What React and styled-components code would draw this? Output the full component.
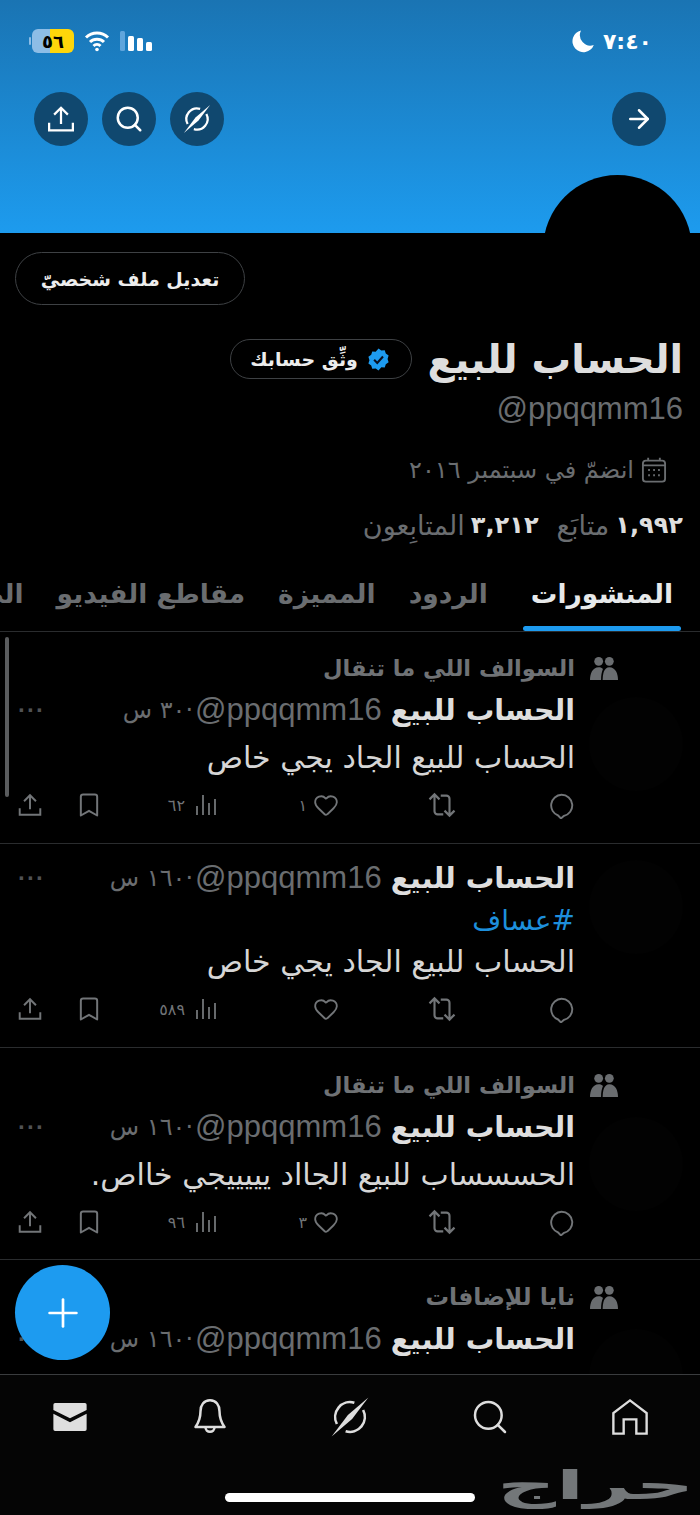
import styled, { createGlobalStyle } from "styled-components";
import { ArrowRight, Heart, Bookmark, Search, Plus } from "lucide-react";

const arabic = `"DejaVu Sans", "Noto Sans", sans-serif`;

const GlobalStyle = createGlobalStyle`
	html, body {
		margin: 0;
		padding: 0;
		background: #000000;
	}
	* {
		box-sizing: border-box;
	}
`;

function Glyph({ size = 24, children, ...rest }) {
	return (
		<svg width={size} height={size} viewBox="0 0 24 24" fill="none" stroke="currentColor" strokeWidth="2" {...rest}>
			{children}
		</svg>
	);
}

const ShareIcon = ({ size }) => (
	<Glyph size={size} strokeWidth="1.8">
		<path d="M12 16V3M6.5 8.5 12 3l5.5 5.5M2.5 15v6h19v-6" />
	</Glyph>
);

const OrbitIcon = ({ size, weight = 1.5 }) => (
	<Glyph size={size} strokeWidth={weight}>
		<path d="M14.5 3.9A8.5 8.5 0 0 0 4.5 16" />
		<path d="M19.5 8A8.5 8.5 0 0 1 9.5 20.1" />
		<path d="M22.5 .8 13.2 13.2 1.5 23.2 10.8 10.8Z" fill="currentColor" stroke="none" />
	</Glyph>
);

const MoonIcon = () => (
	<Glyph size={24} stroke="none">
		<path d="M10 1.5A11 11 0 1 0 22.8 16 10.5 10.5 0 0 1 10 1.5Z" fill="currentColor" />
	</Glyph>
);

const ReplyIcon = () => (
	<Glyph size={27} strokeWidth="1.7">
		<path d="M12 2.5a9.5 9.5 0 0 1 2 18.8L11.5 23.5 9 20.9A9.5 9.5 0 0 1 12 2.5Z" strokeLinejoin="round" />
	</Glyph>
);

const RepostIcon = () => (
	<Glyph size={30} strokeWidth="1.7">
		<path d="M2 7.5 6 3.5l4 4M6 4v13a2.5 2.5 0 0 0 2.5 2.5H13" />
		<path d="M22 16.5l-4 4-4-4M18 20V7a2.5 2.5 0 0 0-2.5-2.5H11" />
	</Glyph>
);

const ViewsIcon = () => (
	<Glyph size={24} strokeWidth="1.8">
		<path d="M3 13v9M9 2v20M15 10v12M21 6v16" />
	</Glyph>
);

const HomeIcon = () => (
	<Glyph size={38} strokeWidth="1.5">
		<path d="M1.5 22.5V9.5L12 1.5l10.5 8v13H16v-9H8v9Z" />
	</Glyph>
);

const BellIcon = () => (
	<Glyph size={40} strokeWidth="1.5">
		<path d="M12 2c-3.7 0-5.700 2.900-5.700 6.500 0 4.800-1.300 7-3 9.500h17.400c-1.700-2.500-3-4.700-3-9.500C17.700 4.900 15.700 2 12 2Z" strokeLinejoin="round" />
		<path d="M9.300 18.200a2.700 2.700 0 0 0 5.400 0" />
	</Glyph>
);

const MailIcon = () => (
	<Glyph size={42} stroke="none">
		<path d="M3.500 4h17a1 1 0 0 1 1 1v3L12 12.700 2.500 8V5a1 1 0 0 1 1-1Z" fill="currentColor" />
		<path d="M2.500 10.200 12 15l9.500-4.800V19a1 1 0 0 1-1 1h-17a1 1 0 0 1-1-1Z" fill="currentColor" />
	</Glyph>
);

const UsersIcon = () => (
	<Glyph size={32} stroke="none">
		<circle cx="8" cy="7" r="3.300" fill="currentColor" />
		<circle cx="16" cy="7" r="3.300" fill="currentColor" />
		<path d="M1.500 21c0-4.500 1.800-9.500 6.500-9.500 1.500 0 2.500.5 3.200 1.300-1 2.300-1.400 5-1.400 8.200Z" fill="currentColor" />
		<path d="M11 21c0-4.500 1-9.500 5-9.500 4.700 0 6.500 5 6.500 9.500Z" fill="currentColor" />
	</Glyph>
);

const CalendarIcon = () => (
	<Glyph size={28} strokeWidth="1.600">
		<rect x="2.500" y="4" width="19" height="18" rx="2.500" />
		<path d="M2.500 8h19M7 1.500V4M17 1.500V4" />
		<path d="M7 12h1.500M11.300 12h1.500M15.500 12h1.500M7 16.500h1.500M11.300 16.500h1.500M15.500 16.500h1.500" />
	</Glyph>
);

const VerifiedIcon = () => (
	<Glyph size={25} stroke="none">
		<path
			d="M12 1.500l2.700 1.900 3.300-.2 1 3.100 2.700 1.900-1 3.200 1 3.200-2.700 1.900-1 3.100-3.300-.2L12 22.500l-2.700-1.900-3.300.2-1-3.100-2.700-1.900 1-3.200-1-3.200 2.700-1.900 1-3.100 3.300.2Z"
			fill="#1d9bf0"
		/>
		<path d="M7.800 12.300l3 3 5.500-6.200" stroke="#0a1020" strokeWidth="2" />
	</Glyph>
);

const WifiIcon = () => (
	<svg width="26" height="22" viewBox="0 0 26 22" fill="none" stroke="#ffffff" strokeWidth="3">
		<path d="M2 7.500a16 16 0 0 1 22 0M6 12a10 10 0 0 1 14 0M9.500 16a5 5 0 0 1 7 0" />
		<circle cx="13" cy="19.500" r="1.800" fill="#ffffff" stroke="none" />
	</svg>
);

const Page = styled.div`
	position: relative;
	width: 700px;
	height: 1515px;
	overflow: hidden;
	display: flex;
	flex-direction: column;
	background: #000000;
	color: #e7e9ea;
	font-family: ${arabic};
`;

const Banner = styled.header`
	flex: none;
	height: 233px;
	padding-top: 29px;
	background: linear-gradient(180deg, #1a74b3 0%, #1d9bee 100%);
`;

const StatusBar = styled.div`
	height: 24px;
	padding: 0 48px 0 32px;
	display: flex;
	justify-content: space-between;
	align-items: center;
	color: #ffffff;
`;

const Clock = styled.div`
	display: flex;
	align-items: center;
	gap: 8px;
	font-size: 22px;
	font-weight: 700;
`;

const Indicators = styled.div`
	display: flex;
	align-items: center;
	gap: 10px;
	direction: ltr;
`;

const Battery = styled.div`
	position: relative;
	width: 42px;
	height: 24px;
	border-radius: 6px;
	display: flex;
	align-items: center;
	justify-content: center;
	background: linear-gradient(90deg, #8dbde6 42%, #ffd60a 42%);
	color: #000000;
	font-size: 18px;
	font-weight: 700;

	&::before {
		content: "";
		position: absolute;
		left: -3px;
		top: 8px;
		width: 2px;
		height: 8px;
		border-radius: 1px;
		background: #8dbde6;
	}
`;

const Signal = styled.div`
	display: flex;
	align-items: flex-end;
	gap: 3px;
	height: 20px;
`;

const SignalBar = styled.span`
	width: ${(p) => (p.$off ? 5 : 6)}px;
	height: ${(p) => p.$h}px;
	border-radius: 1.5px;
	background: ${(p) => (p.$off ? "#5fa5dc" : "#ffffff")};
`;

const ActionBar = styled.div`
	margin-top: 39px;
	padding: 0 34px;
	display: flex;
	justify-content: space-between;
`;

const ActionGroup = styled.div`
	display: flex;
	gap: 14px;
`;

const RoundButton = styled.button`
	width: 54px;
	height: 54px;
	padding: 0;
	border: none;
	border-radius: 50%;
	display: flex;
	align-items: center;
	justify-content: center;
	background: #10486f;
	color: #ffffff;
`;

const Avatar = styled.div`
	position: absolute;
	top: 175px;
	right: 8px;
	width: 149px;
	height: 149px;
	border-radius: 50%;
	background: #000000;
`;

const Profile = styled.section`
	flex: none;
	padding: 19px 17px 0 15px;
`;

const EditRow = styled.div`
	display: flex;
	justify-content: flex-end;
`;

const EditButton = styled.button`
	width: 230px;
	height: 53px;
	border: 1.5px solid #3e4144;
	border-radius: 27px;
	background: transparent;
	color: #ededed;
	font-family: ${arabic};
	font-size: 19px;
	font-weight: 700;
`;

const NameRow = styled.div`
	margin-top: 33px;
	display: flex;
	align-items: center;
	gap: 16px;
`;

const Name = styled.h1`
	margin: 0;
	font-size: 39.5px;
	line-height: 42px;
	font-weight: 700;
	color: #dedede;
`;

const VerifyPill = styled.div`
	width: 182px;
	height: 40px;
	border: 1.5px solid #3e4144;
	border-radius: 20px;
	display: flex;
	align-items: center;
	justify-content: center;
	gap: 8px;
	font-size: 19px;
	font-weight: 700;
	color: #ededed;
`;

const Handle = styled.div`
	margin-top: 10px;
	font-family: "Liberation Sans", Arial, sans-serif;
	font-size: 31px;
	line-height: 38px;
	color: #6a6d70;
	direction: ltr;
	text-align: right;
`;

const JoinRow = styled.div`
	margin-top: 27px;
	padding-right: 15px;
	height: 30px;
	display: flex;
	align-items: center;
	gap: 6px;
	font-size: 24px;
	color: #6a6d70;
`;

const StatsRow = styled.div`
	margin-top: 24px;
	height: 32px;
	display: flex;
	align-items: center;
	gap: 18px;
	font-size: 27px;
	color: #6a6d70;
`;

const Stat = styled.span`
	display: flex;
	align-items: center;
	gap: 6px;
`;

const StatNumber = styled.b`
	font-size: 24px;
	color: #dedede;
`;

const Tabs = styled.nav`
	flex: none;
	margin-top: 30px;
	height: 61px;
	padding-right: 19px;
	display: flex;
	gap: 1px;
	overflow: hidden;
	border-bottom: 1px solid #2a2c2e;
`;

const Tab = styled.div`
	flex: none;
	position: relative;
	padding: 0 ${(p) => p.$pad || 16}px 16px;
	margin-left: ${(p) => (p.$active ? 18 : 0)}px;
	height: 60px;
	display: flex;
	align-items: center;
	font-size: 26.5px;
	font-weight: 700;
	color: ${(p) => (p.$active ? "#e7e9ea" : "#6a6d70")};

	${(p) =>
		p.$active &&
		`&::after {
		content: "";
		position: absolute;
		left: 0;
		right: 0;
		bottom: 0;
		height: 5px;
		border-radius: 3px;
		background: #1d9bf0;
	}`}
`;

const Feed = styled.main`
	flex: 1;
	min-height: 0;
	overflow: hidden;
`;

const ScrollThumb = styled.div`
	position: absolute;
	top: 637px;
	left: 5px;
	width: 4px;
	height: 160px;
	border-radius: 2px;
	background: #5a5c5e;
`;

const Post = styled.article`
	position: relative;
	height: ${(p) => p.$h}px;
	padding: ${(p) => p.$top}px 125px 0 14px;
	border-bottom: 1px solid #2a2c2e;
`;

const PostAvatar = styled.span`
	position: absolute;
	top: ${(p) => p.$top}px;
	right: 17px;
	width: 94px;
	height: 94px;
	border-radius: 50%;
	background: #020202;
`;

const Context = styled.div`
	position: relative;
	height: 32px;
	display: flex;
	align-items: center;
	font-size: ${(p) => p.$size}px;
	font-weight: 700;
	color: #6f7275;
	margin-bottom: 9px;
`;

const ContextIcon = styled.span`
	position: absolute;
	right: -45px;
	top: 0;
	color: #6a6d70;
`;

const Meta = styled.div`
	height: 34px;
	display: flex;
	align-items: center;
	gap: 9px;
`;

const AuthorName = styled.span`
	font-size: 28.5px;
	font-weight: 700;
	color: #dedede;
`;

const AuthorHandle = styled.span`
	font-family: "Liberation Sans", Arial, sans-serif;
	font-size: 31px;
	color: #6a6d70;
	direction: ltr;
`;

const Age = styled.span`
	margin-right: -7px;
	font-size: 24px;
	color: #6a6d70;
`;

const More = styled.span`
	margin-right: auto;
	margin-left: 4px;
	font-family: "Liberation Sans", Arial, sans-serif;
	font-size: 24px;
	font-weight: 700;
	letter-spacing: 1px;
	line-height: 10px;
	color: #505254;
`;

const Tag = styled.div`
	margin-top: 16px;
	height: 20px;
	font-size: 28px;
	line-height: 20px;
	color: #1d8fdc;
`;

const Body = styled.div`
	margin-top: 11px;
	height: 40px;
	font-size: 30px;
	line-height: 40px;
	white-space: nowrap;
	color: #d6d6d6;
`;

const Actions = styled.div`
	margin-top: 10px;
	height: 34px;
	display: flex;
	align-items: center;
	color: #727578;
`;

const ActionCell = styled.span`
	width: ${(p) => p.$w}px;
	flex: none;
	display: flex;
	align-items: center;
	gap: ${(p) => p.$gap || 6}px;
	font-size: 16px;
`;

const Compose = styled.button`
	position: absolute;
	left: 15px;
	top: 1265px;
	width: 95px;
	height: 95px;
	padding: 0;
	border: none;
	border-radius: 50%;
	display: flex;
	align-items: center;
	justify-content: center;
	background: #1d9bf0;
	color: #ffffff;
`;

const BottomNav = styled.nav`
	position: relative;
	flex: none;
	height: 141px;
	padding: 21px 0 0;
	display: flex;
	justify-content: space-around;
	align-items: flex-start;
	background: #050505;
	border-top: 1px solid #3a3c3e;
	color: #dedede;
`;

const NavItem = styled.span`
	width: 140px;
	height: 42px;
	display: flex;
	align-items: center;
	justify-content: center;
`;

const HomeBar = styled.div`
	position: absolute;
	left: 225px;
	top: 1493px;
	width: 250px;
	height: 9px;
	border-radius: 5px;
	background: #ffffff;
`;

const Watermark = styled.div`
	position: absolute;
	right: 6px;
	top: 1460px;
	font-size: 40px;
	line-height: 50px;
	font-weight: 700;
	color: #737779;
	transform: scaleX(2.05);
	transform-origin: right center;
`;

const posts = [
	{ h: 212, top: 20, avatar: 65, context: "السوالف اللي ما تنقال", size: 22.5, age: "٣٠ س", body: "الحساب للبيع الجاد يجي خاص", like: "١", views: "٦٢" },
	{ h: 204, top: 17, avatar: 16, age: "١٦٠ س", tag: "#عساف", body: "الحساب للبيع الجاد يجي خاص", views: "٥٨٩" },
	{ h: 212, top: 21, avatar: 69, context: "السوالف اللي ما تنقال", size: 22.5, age: "١٦٠ س", body: "الحسسساب للبيع الجااد يييييجي خااص.", like: "٣", views: "٩٦" },
	{ h: 212, top: 21, avatar: 69, context: "نايا للإضافات", size: 23.5, age: "١٦٠ س", body: "الحساب للبيع الجاد يجي خاص" },
];

function PostItem({ post }) {
	return (
		<Post $h={post.h} $top={post.top}>
			<PostAvatar $top={post.avatar} />
			{post.context && (
				<Context $size={post.size}>
					<ContextIcon>
						<UsersIcon />
					</ContextIcon>
					{post.context}
				</Context>
			)}
			<Meta>
				<AuthorName>الحساب للبيع</AuthorName>
				<AuthorHandle>@ppqqmm16</AuthorHandle>
				<Age>·{post.age}</Age>
				<More>···</More>
			</Meta>
			{post.tag && <Tag>{post.tag}</Tag>}
			<Body>{post.body}</Body>
			<Actions>
				<ActionCell $w={118}>
					<ReplyIcon />
				</ActionCell>
				<ActionCell $w={118}>
					<RepostIcon />
				</ActionCell>
				<ActionCell $w={121}>
					<Heart size={26} strokeWidth={1.7} />
					{post.like}
				</ActionCell>
				<ActionCell $w={115} $gap={9}>
					<ViewsIcon />
					{post.views}
				</ActionCell>
				<ActionCell $w={60}>
					<Bookmark size={28} strokeWidth={1.7} />
				</ActionCell>
				<ActionCell $w={28}>
					<ShareIcon size={26} />
				</ActionCell>
			</Actions>
		</Post>
	);
}

export default function App() {
	return (
		<>
			<GlobalStyle />
			<Page dir="rtl">
				<Banner>
					<StatusBar>
						<Clock>
							<span>٧:٤٠</span>
							<MoonIcon />
						</Clock>
						<Indicators>
							<Battery>٥٦</Battery>
							<WifiIcon />
							<Signal>
								<SignalBar $h={20} $off />
								<SignalBar $h={15} />
								<SignalBar $h={13} />
								<SignalBar $h={9} />
							</Signal>
						</Indicators>
					</StatusBar>
					<ActionBar>
						<RoundButton>
							<ArrowRight size={30} strokeWidth={2} />
						</RoundButton>
						<ActionGroup>
							<RoundButton>
								<OrbitIcon size={30} weight={1.8} />
							</RoundButton>
							<RoundButton>
								<Search size={30} strokeWidth={2} />
							</RoundButton>
							<RoundButton>
								<ShareIcon size={30} />
							</RoundButton>
						</ActionGroup>
					</ActionBar>
				</Banner>

				<Avatar />

				<Profile>
					<EditRow>
						<EditButton>تعديل ملف شخصيّ</EditButton>
					</EditRow>
					<NameRow>
						<Name>الحساب للبيع</Name>
						<VerifyPill>
							<VerifiedIcon />
							وثِّق حسابك
						</VerifyPill>
					</NameRow>
					<Handle>@ppqqmm16</Handle>
					<JoinRow>
						<CalendarIcon />
						انضمّ في سبتمبر ٢٠١٦
					</JoinRow>
					<StatsRow>
						<Stat>
							<StatNumber>١,٩٩٢</StatNumber> متابَع
						</Stat>
						<Stat>
							<StatNumber>٣,٢١٢</StatNumber> المتابِعون
						</Stat>
					</StatsRow>
				</Profile>

				<Tabs>
					<Tab $active $pad={8}>المنشورات</Tab>
					<Tab>الردود</Tab>
					<Tab>المميزة</Tab>
					<Tab>مقاطع الفيديو</Tab>
					<Tab>الصور</Tab>
				</Tabs>

				<Feed>
					{posts.map((post, i) => (
						<PostItem key={i} post={post} />
					))}
				</Feed>

				<BottomNav>
					<NavItem>
						<HomeIcon />
					</NavItem>
					<NavItem>
						<Search size={40} strokeWidth={1.5} />
					</NavItem>
					<NavItem>
						<OrbitIcon size={42} />
					</NavItem>
					<NavItem>
						<BellIcon />
					</NavItem>
					<NavItem>
						<MailIcon />
					</NavItem>
				</BottomNav>

				<ScrollThumb />
				<Compose>
					<Plus size={46} strokeWidth={1.4} />
				</Compose>
				<Watermark>حراج</Watermark>
				<HomeBar />
			</Page>
		</>
	);
}
